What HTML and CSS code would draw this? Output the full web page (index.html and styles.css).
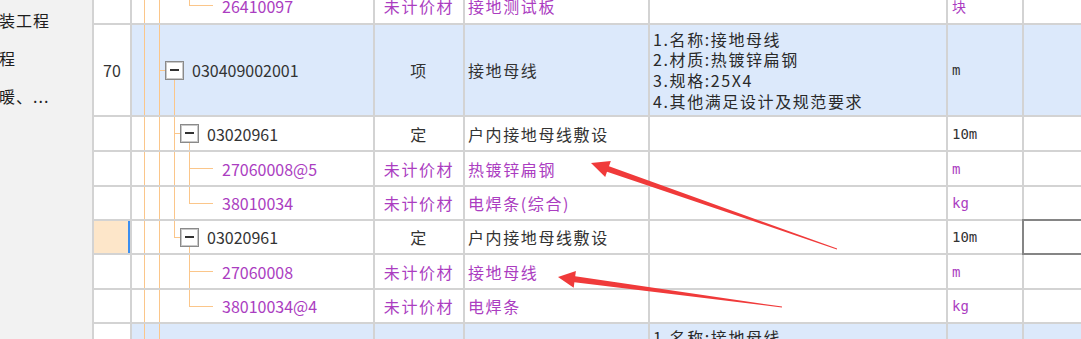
FILE: index.html
```html
<!DOCTYPE html>
<html>
    <head>
        <meta charset="utf-8"/>
        <link rel="stylesheet" href="styles.css">
    </head>
    <body>
        <div class="screen">
            <!-- project tree on the left, cut off by the splitter -->
            <div class="nav">
                <div class="nav-item">装工程</div>
                <div class="nav-item">程</div>
                <div class="nav-item">暖、...</div>
            </div>

            <!-- bill of quantities grid -->
            <div class="grid">
                <div class="row first">
                    <div class="cell num"></div>
                    <div class="cell code"><i class="g line"></i><i class="g line"></i><i class="g"></i><i class="g end"></i><i class="leaf"></i><span class="txt sub mat">26410097</span></div>
                    <div class="cell type mat">未计价材</div>
                    <div class="cell name mat">接地测试板</div>
                    <div class="cell feat"></div>
                    <div class="cell unit mat">块</div>
                    <div class="cell"></div>
                </div>

                <div class="row item">
                    <div class="cell num">70</div>
                    <div class="cell code"><i class="g line"></i><i class="g tee"></i><i class="node"><b class="box"></b></i><span class="txt">030409002001</span></div>
                    <div class="cell type">项</div>
                    <div class="cell name">接地母线</div>
                    <div class="cell feat">1.名称:接地母线<br>2.材质:热镀锌扁钢<br>3.规格:25X4<br>4.其他满足设计及规范要求</div>
                    <div class="cell unit">m</div>
                    <div class="cell"></div>
                </div>

                <div class="row">
                    <div class="cell num"></div>
                    <div class="cell code"><i class="g line"></i><i class="g line"></i><i class="g tee"></i><i class="node"><b class="box"></b></i><span class="txt">03020961</span></div>
                    <div class="cell type">定</div>
                    <div class="cell name">户内接地母线敷设</div>
                    <div class="cell feat"></div>
                    <div class="cell unit">10m</div>
                    <div class="cell"></div>
                </div>

                <div class="row">
                    <div class="cell num"></div>
                    <div class="cell code"><i class="g line"></i><i class="g line"></i><i class="g line"></i><i class="g tee"></i><i class="leaf"></i><span class="txt sub mat">27060008@5</span></div>
                    <div class="cell type mat">未计价材</div>
                    <div class="cell name mat">热镀锌扁钢</div>
                    <div class="cell feat"></div>
                    <div class="cell unit mat">m</div>
                    <div class="cell"></div>
                </div>

                <div class="row short">
                    <div class="cell num"></div>
                    <div class="cell code"><i class="g line"></i><i class="g line"></i><i class="g line"></i><i class="g end"></i><i class="leaf"></i><span class="txt sub mat">38010034</span></div>
                    <div class="cell type mat">未计价材</div>
                    <div class="cell name mat">电焊条(综合)</div>
                    <div class="cell feat"></div>
                    <div class="cell unit mat">kg</div>
                    <div class="cell"></div>
                </div>

                <div class="row short sel">
                    <div class="cell num"></div>
                    <div class="cell code"><i class="g line"></i><i class="g line"></i><i class="g end"></i><i class="node"><b class="box"></b></i><span class="txt">03020961</span></div>
                    <div class="cell type">定</div>
                    <div class="cell name">户内接地母线敷设</div>
                    <div class="cell feat"></div>
                    <div class="cell unit">10m</div>
                    <div class="cell pick"></div>
                </div>

                <div class="row">
                    <div class="cell num"></div>
                    <div class="cell code"><i class="g line"></i><i class="g line"></i><i class="g"></i><i class="g tee"></i><i class="leaf"></i><span class="txt sub mat">27060008</span></div>
                    <div class="cell type mat">未计价材</div>
                    <div class="cell name mat">接地母线</div>
                    <div class="cell feat"></div>
                    <div class="cell unit mat">m</div>
                    <div class="cell"></div>
                </div>

                <div class="row short">
                    <div class="cell num"></div>
                    <div class="cell code"><i class="g line"></i><i class="g line"></i><i class="g"></i><i class="g end"></i><i class="leaf"></i><span class="txt sub mat">38010034@4</span></div>
                    <div class="cell type mat">未计价材</div>
                    <div class="cell name mat">电焊条</div>
                    <div class="cell feat"></div>
                    <div class="cell unit mat">kg</div>
                    <div class="cell"></div>
                </div>

                <!-- next item, only its top edge is on screen -->
                <div class="row item">
                    <div class="cell num"></div>
                    <div class="cell code"><i class="g line"></i><i class="g line"></i></div>
                    <div class="cell type"></div>
                    <div class="cell name"></div>
                    <div class="cell feat top">1.名称:接地母线</div>
                    <div class="cell unit"></div>
                    <div class="cell"></div>
                </div>
            </div>

            <!-- red arrows drawn over the grid -->
            <svg class="marks" width="1081" height="339" viewBox="0 0 1081 339">
                <polygon fill="#f03a3a" points="591,163 610.8,161 609,166.2 837.1,248.6 836.9,249.4 607,171.8 605.2,177"/>
                <polygon fill="#f03a3a" points="558,277 575.9,270.9 575.2,276.3 782.1,306.6 781.9,307.4 574.4,282.3 573.7,287.7"/>
            </svg>
        </div>
    </body>
</html>
```

FILE: styles.css
```css
/* page frame */
body {
    margin: 0;
    background-color: #ffffff;
    font-family: "Noto Sans CJK SC", sans-serif;
    font-size: 16px;
    color: #333333;
}

.screen {
    position: relative;
    display: flex;
    width: 1081px;
    height: 339px;
    overflow: hidden;
}

/* left tree, only the tail of each label shows */
.nav {
    flex: none;
    width: 92px;
    padding-top: 1px;
    background-color: #f2f2f2;
    overflow: hidden;
    white-space: nowrap;
}

.nav-item {
    margin-left: -1px;
    line-height: 38px;
    letter-spacing: 1px;
    color: #1e1e1e;
}

/* the grid: gaps show the background as cell lines */
.grid {
    flex: 1;
    display: flex;
    flex-direction: column;
    gap: 2px;
    margin-top: -12px;
    border-left: 2px solid #d3d3d3;
    background-color: #d3d3d3;
}

.row {
    flex: none;
    display: grid;
    grid-template-columns: 36px 241px 88px 183px 296px 74px 1fr;
    column-gap: 2px;
    height: 33px;
}

.row.first { height: 35px; }
.row.short { height: 32px; }
.row.item { height: 90px; }

.cell {
    display: flex;
    align-items: center;
    min-width: 0;
    overflow: hidden;
    white-space: nowrap;
    background-color: #ffffff;
}

.row.item .cell { background-color: #dce9fb; }
.row.item .cell.num { background-color: #ffffff; }

.row.sel .cell.num {
    background-color: #fde6c9;
    box-shadow: inset -2px 0 0 #3b8ef0;
}

.row.sel .cell.pick {
    outline: 2px solid #858585;
}

.num { justify-content: center; }

.type {
    justify-content: center;
    letter-spacing: 1.6px;
}

.name {
    padding-left: 3px;
    letter-spacing: 1.6px;
}

.feat {
    padding-left: 3px;
    line-height: 20.7px;
    letter-spacing: 1.6px;
    color: #2a2a2a;
}

.feat.top {
    align-items: flex-start;
    padding-top: 3px;
}

.unit {
    padding-left: 4px;
    font-family: "DejaVu Sans Mono", "Noto Sans CJK SC", monospace;
    font-size: 14px;
}

/* unpriced material rows */
.mat { color: #ab3dc1; }

/* tree guides in the code column */
.code {
    align-items: stretch;
    --tl: #fbc68a;
}

.g {
    flex: none;
    width: 15px;
}

.g.line {
    background: linear-gradient(var(--tl), var(--tl)) 12px 0 / 1px 100% no-repeat;
}

.g.tee {
    background:
        linear-gradient(var(--tl), var(--tl)) 12px 0 / 1px 100% no-repeat,
        linear-gradient(var(--tl), var(--tl)) 12px 50% / 3px 1px no-repeat;
}

.g.end {
    background:
        linear-gradient(var(--tl), var(--tl)) 12px 0 / 1px 50% no-repeat,
        linear-gradient(var(--tl), var(--tl)) 12px 50% / 3px 1px no-repeat;
}

.node {
    flex: none;
    display: flex;
    align-items: center;
    width: 22px;
    background:
        linear-gradient(var(--tl), var(--tl)) 12px 100% / 1px 50% no-repeat,
        linear-gradient(var(--tl), var(--tl)) 0 50% / 3px 1px no-repeat;
}

.box {
    position: relative;
    box-sizing: border-box;
    width: 19px;
    height: 19px;
    margin-left: 3px;
    border: 1px solid #8a8a8a;
    box-shadow: inset 0 0 0 1px #c9c9c9;
    background-color: #ffffff;
}

/* the minus sign of an expanded node */
.box::after {
    content: "";
    position: absolute;
    left: 4px;
    top: 7px;
    width: 9px;
    height: 2px;
    background-color: #333333;
}

.leaf {
    flex: none;
    width: 21px;
    background: linear-gradient(var(--tl), var(--tl)) 0 50% / 100% 1px no-repeat;
}

.txt {
    align-self: center;
    margin-left: 8px;
}

.txt.sub { margin-left: 9px; }

/* arrow layer */
.marks {
    position: absolute;
    left: 0;
    top: 0;
    pointer-events: none;
}
```
